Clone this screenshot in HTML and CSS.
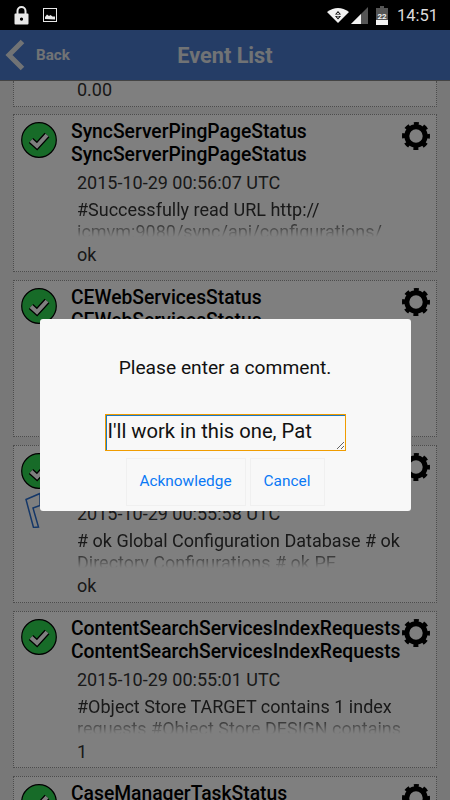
FILE: index.html
```html
<!DOCTYPE html>
<html lang="en">
<head>
    <meta charset="UTF-8">
    <meta name="viewport" content="width=device-width, initial-scale=1.0">
    <title>Event List</title>
    <link rel="stylesheet" href="styles.css">
</head>
<body>
    <svg class="defs" width="0" height="0">
        <symbol id="ok" viewBox="0 0 36 36">
            <circle cx="18" cy="18" r="17.3" fill="#2fd650" stroke="#000" stroke-width="1.2"/>
            <path d="M10 18.500l6 5.500 10-11" fill="none" stroke="#000" stroke-width="6.500"/>
            <path d="M10 18.500l6 5.500 10-11" fill="none" stroke="#fff" stroke-width="4"/>
        </symbol>
        <symbol id="gear" viewBox="0 0 28 28">
            <circle cx="14" cy="14" r="9.200" fill="none" stroke="#000" stroke-width="5"/>
            <circle cx="14" cy="14" r="12" fill="none" stroke="#000" stroke-width="4" stroke-dasharray="4.800 4.620" stroke-dashoffset="2.400"/>
        </symbol>
    </svg>

    <div class="status-bar">
        <svg class="ico-lock" width="15" height="19" viewBox="0 0 15 19">
            <path d="M3.500 8V5a4 4 0 0 1 8 0v3" fill="none" stroke="#e8e8e8" stroke-width="2"/>
            <path fill-rule="evenodd" d="M1.500 7.500h12a1 1 0 0 1 1 1v9a1 1 0 0 1-1 1h-12a1 1 0 0 1-1-1v-9a1 1 0 0 1 1-1zM7.500 11.500a1.600 1.600 0 1 0 .01 0z" fill="#e8e8e8"/>
        </svg>
        <svg class="ico-image" width="14" height="14" viewBox="0 0 14 14">
            <rect x=".5" y=".5" width="13" height="13" fill="none" stroke="#e8e8e8"/>
            <path d="M2 11V9l2-2.500 2 1.500 1.500-1 2 1.500H12v3z" fill="#e8e8e8"/>
        </svg>
        <span class="status-gap"></span>
        <svg class="ico-wifi" width="22" height="16" viewBox="0 0 22 16">
            <path d="M0 5Q11-3 22 5L11 16z" fill="#f2f2f2"/>
            <path d="M11 4l3 3.500H8zM8 9h6l-3 3.500z" fill="#000"/>
            <path d="M11 5.500l1.500 1.500h-3zM9.500 9.500h3L11 11z" fill="#f2f2f2"/>
        </svg>
        <svg class="ico-signal" width="17" height="17" viewBox="0 0 17 17">
            <path d="M17 0v17H0z" fill="#555"/>
            <path d="M10 7v10H0z" fill="#f2f2f2"/>
        </svg>
        <svg class="ico-battery" width="12" height="19" viewBox="0 0 12 19">
            <path d="M4 0h4v2h4v17H0V2h4z" fill="#555"/>
            <rect y="14" width="12" height="5" fill="#f2f2f2"/>
            <text x="6" y="12.500" text-anchor="middle" class="battery-num">22</text>
        </svg>
        <span class="clock">14:51</span>
    </div>

    <div class="screen">
        <header class="app-bar">
            <a class="back">
                <svg width="20" height="32" viewBox="0 0 20 32">
                    <path d="M17.500 2.500L4 16l13.500 13.500" fill="none" stroke="#e2e6ea" stroke-width="5"/>
                </svg>
                <span>Back</span>
            </a>
            <h1>Event List</h1>
        </header>

        <div class="event-list">
            <div class="card card-tail">
                <div class="event-value">0.00</div>
            </div>

            <div class="card">
                <div class="card-top">
                    <svg class="status-icon"><use href="#ok"/></svg>
                    <div class="event-title">SyncServerPingPageStatus<br>SyncServerPingPageStatus</div>
                    <svg class="gear"><use href="#gear"/></svg>
                </div>
                <div class="event-body">
                    <div class="event-date">2015-10-29 00:56:07 UTC</div>
                    <div class="event-desc">#Successfully read URL http://<br>icmvm:9080/sync/api/configurations/</div>
                    <div class="event-value">ok</div>
                </div>
            </div>

            <div class="card">
                <div class="card-top">
                    <svg class="status-icon"><use href="#ok"/></svg>
                    <div class="event-title">CEWebServicesStatus<br>CEWebServicesStatus</div>
                    <svg class="gear"><use href="#gear"/></svg>
                </div>
            </div>

            <div class="card">
                <div class="card-top">
                    <div class="icon-stack">
                        <svg class="status-icon"><use href="#ok"/></svg>
                        <svg class="pin" width="20" height="36" viewBox="0 0 20 36">
                            <path d="M1 7.500L15 1.500v12l-7 2.500 5.500 19-5 .5z" fill="none" stroke="#2a6fd0" stroke-width="1.500"/>
                        </svg>
                    </div>
                    <div class="event-title"></div>
                    <svg class="gear"><use href="#gear"/></svg>
                </div>
                <div class="event-body">
                    <div class="event-date">2015-10-29 00:55:58 UTC</div>
                    <div class="event-desc"># ok Global Configuration Database # ok<br>Directory Configurations # ok PE</div>
                    <div class="event-value">ok</div>
                </div>
            </div>

            <div class="card">
                <div class="card-top">
                    <svg class="status-icon"><use href="#ok"/></svg>
                    <div class="event-title">ContentSearchServicesIndexRequests<br>ContentSearchServicesIndexRequests</div>
                    <svg class="gear"><use href="#gear"/></svg>
                </div>
                <div class="event-body">
                    <div class="event-date">2015-10-29 00:55:01 UTC</div>
                    <div class="event-desc">#Object Store TARGET contains 1 index<br>requests #Object Store DESIGN contains</div>
                    <div class="event-value">1</div>
                </div>
            </div>

            <div class="card">
                <div class="card-top">
                    <svg class="status-icon"><use href="#ok"/></svg>
                    <div class="event-title">CaseManagerTaskStatus<br>CaseManagerTaskStatus</div>
                    <svg class="gear"><use href="#gear"/></svg>
                </div>
            </div>
        </div>

        <div class="overlay">
            <div class="dialog">
                <p class="dialog-text">Please enter a comment.</p>
                <textarea class="comment">I'll work in this one, Pat</textarea>
                <div class="dialog-actions">
                    <button class="dialog-btn btn-ack">Acknowledge</button>
                    <button class="dialog-btn btn-cancel">Cancel</button>
                </div>
            </div>
        </div>
    </div>
</body>
</html>
```

FILE: styles.css
```css
* {
    margin: 0;
    padding: 0;
    box-sizing: border-box;
}

body {
    font-family: Roboto, "Liberation Sans", sans-serif;
    background: #000;
    height: 800px;
    overflow: hidden;
}

.defs {
    display: block;
    height: 0;
}

.status-bar {
    height: 30px;
    background: #000;
    display: flex;
    align-items: center;
    padding: 0 12px 0 14px;
}

.ico-image {
    margin-left: 14px;
}

.status-gap {
    flex: 1;
}

.ico-signal {
    margin-left: 2px;
}

.ico-battery {
    margin-left: 8px;
}

.battery-num {
    font-family: Roboto, sans-serif;
    font-size: 8px;
    font-weight: 700;
    fill: #f2f2f2;
}

.clock {
    margin-left: 9px;
    color: #dcdcdc;
    font-size: 16.500px;
}

.screen {
    position: relative;
    height: 770px;
    overflow: hidden;
    background: #f0f0f0;
}

.app-bar {
    height: 51px;
    background: #4a7acc;
    border-bottom: 1px solid #888;
    display: flex;
    align-items: center;
}

.back {
    display: flex;
    align-items: center;
    gap: 11px;
    padding-left: 5px;
    color: #e2e6ea;
    font-size: 15.200px;
    font-weight: 700;
}

.app-bar h1 {
    flex: 1;
    text-align: center;
    padding-right: 70px;
    color: #e2e6ea;
    font-size: 21.700px;
    font-weight: 700;
}

.event-list {
    padding: 0 13px;
}

.card {
    height: 157.600px;
    margin-bottom: 8px;
    padding: 7px 6px 0 7px;
    background: #fff;
    border: 1px dotted #999;
}

.card-tail {
    height: 26px;
    padding: 0;
    border-top: none;
    margin-bottom: 7px;
}

.card-tail .event-value {
    margin: 0 0 0 63px;
    line-height: 17px;
}

.card-top {
    display: flex;
    align-items: flex-start;
}

.status-icon {
    display: block;
    width: 36px;
    height: 36px;
    flex: none;
}

.icon-stack {
    width: 36px;
    height: 44px;
    flex: none;
}

.pin {
    display: block;
    margin: 3px 0 0 4px;
}

.event-title {
    flex: 1;
    min-width: 0;
    margin: -2px 0 0 14px;
    color: #000;
    font-size: 19.300px;
    font-weight: 500;
    line-height: 23px;
    white-space: nowrap;
}

.gear {
    width: 28px;
    height: 28px;
    flex: none;
}

.event-body {
    padding-left: 56px;
    color: #333;
    font-size: 18px;
}

.event-date {
    margin-top: 6px;
    line-height: 22px;
}

.event-desc {
    margin-top: 5px;
    height: 38px;
    overflow: hidden;
    line-height: 22px;
    white-space: nowrap;
    -webkit-mask-image: linear-gradient(#000 55%, transparent 100%);
    mask-image: linear-gradient(#000 55%, transparent 100%);
}

.event-value {
    margin-top: 8px;
    line-height: 20px;
    color: #333;
    font-size: 18px;
}

.overlay {
    position: absolute;
    inset: 0;
    background: rgba(0, 0, 0, 0.5);
    display: flex;
    align-items: center;
    justify-content: center;
}

.dialog {
    width: 371px;
    height: 192px;
    background: #f8f8f8;
    border-radius: 3px;
    display: flex;
    flex-direction: column;
    align-items: center;
}

.dialog-text {
    margin-top: 38px;
    color: #111;
    font-size: 19.200px;
    line-height: 22px;
}

.comment {
    width: 241px;
    height: 37px;
    margin-top: 35px;
    padding: 0 2px;
    background: #f8f8f8;
    border: 1px solid #f09c00;
    box-shadow: inset 1px 1px 0 #1a78c2;
    outline: none;
    color: #111;
    font-family: Roboto, sans-serif;
    font-size: 20.200px;
    line-height: 33px;
    overflow: hidden;
}

.dialog-actions {
    display: flex;
    gap: 4px;
    margin-top: 7px;
}

.dialog-btn {
    height: 48px;
    background: #f8f8f8;
    border: 1px solid #f0f0f0;
    color: #0a78f5;
    font-family: Roboto, sans-serif;
    font-size: 15.400px;
    padding-bottom: 2px;
}

.btn-ack {
    width: 120px;
}

.btn-cancel {
    width: 75px;
}
```
